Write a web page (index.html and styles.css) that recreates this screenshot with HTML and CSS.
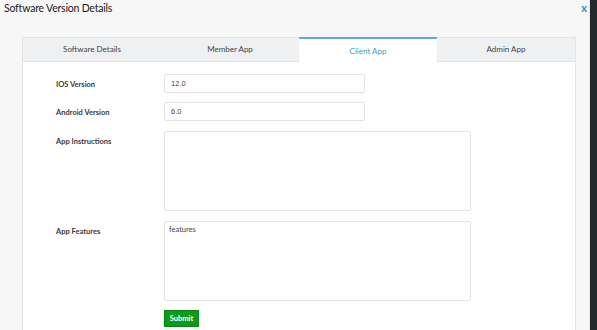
FILE: index.html
```html
<!DOCTYPE html>
<html lang="en">
<head>
    <meta charset="utf-8">
    <title>Software Version Details</title>
    <link rel="stylesheet" href="styles.css">
</head>
<body>
    <div class="modal">
        <div class="modal-header">
            <h4>Software Version Details</h4>
            <span class="close">x</span>
        </div>
        <div class="card">
            <div class="tabs">
                <div class="tab">Software Details</div>
                <div class="tab">Member App</div>
                <div class="tab active">Client App</div>
                <div class="tab">Admin App</div>
            </div>
            <form class="tab-body">
                <div class="form-row">
                    <label>IOS Version</label>
                    <input type="text" class="input" value="12.0">
                </div>
                <div class="form-row">
                    <label>Android Version</label>
                    <input type="text" class="input" value="6.0">
                </div>
                <div class="form-row area-row">
                    <label>App Instructions</label>
                    <textarea class="textarea"></textarea>
                </div>
                <div class="form-row area-row">
                    <label>App Features</label>
                    <textarea class="textarea">features</textarea>
                </div>
                <div class="form-row">
                    <label></label>
                    <button type="button" class="submit-btn">Submit</button>
                </div>
            </form>
        </div>
    </div>
    <div class="side-strip"></div>
</body>
</html>
```

FILE: styles.css
```css
body {
    margin: 0;
    width: 597px;
    height: 330px;
    overflow: hidden;
    display: flex;
    background: #f7f7f7;
    font-family: Lato, 'Open Sans', sans-serif;
}
.modal {
    width: 589px;
    flex-shrink: 0;
    background: #f7f7f7;
    border-right: 1px solid #e6e6e6;
}
.side-strip {
    flex: 1;
    background: #25282a;
}
.modal-header {
    display: flex;
    justify-content: space-between;
    align-items: flex-start;
    padding: 2px 4px 0 4px;
    height: 35px;
}
.modal-header h4 {
    margin: 0;
    font-size: 10.5px;
    font-weight: 400;
    color: #222;
    letter-spacing: -0.2px;
}
.close {
    color: #2a8fc8;
    font-weight: 700;
    font-size: 11px;
    line-height: 11px;
    margin-top: 0;
    margin-right: -2px;
}
.card {
    margin-left: 22px;
    width: 552px;
    background: #fff;
    border: 1px solid #e4e4e4;
    border-bottom: none;
    height: 300px;
}
.tabs {
    display: flex;
    height: 24px;
}
.tab {
    flex: 1;
    background: #eff0f2;
    border-bottom: 1px solid #e4e4e4;
    font-size: 8px;
    color: #444;
    text-align: center;
    line-height: 22px;
}
.tab.active {
    background: #fff;
    color: #3b9cc6;
    border-top: 2px solid #5aaed3;
    border-bottom: none;
    margin-top: -1px;
    line-height: 24px;
}
.tab-body {
    padding: 12px 0 0 33px;
    display: flex;
    flex-direction: column;
    gap: 9px;
}
.form-row {
    display: flex;
    align-items: flex-start;
}
.area-row {
    margin-top: 1px;
}
.form-row label {
    width: 108px;
    flex-shrink: 0;
    font-size: 7.5px;
    color: #3a3a3a;
    font-weight: 700;
    padding-top: 6px;
}
.input {
    width: 201px;
    height: 19px;
    box-sizing: border-box;
    border: 1px solid #e4e4e4;
    border-radius: 2px;
    padding: 0 6px;
    font-family: 'Liberation Sans', Arial, sans-serif;
    font-size: 7.5px;
    color: #444;
    margin: 0;
}
.textarea {
    width: 307px;
    height: 80px;
    box-sizing: border-box;
    border: 1px solid #e4e4e4;
    border-radius: 2px;
    padding: 3px 4px;
    font-family: Lato, sans-serif;
    font-size: 7.5px;
    color: #444;
    resize: none;
    margin: 0;
}
.submit-btn {
    width: 35px;
    height: 17px;
    padding: 0;
    background: #0a9b1a;
    border: 1px solid #078414;
    color: #fff;
    font-family: Lato, sans-serif;
    font-size: 7.5px;
    font-weight: 700;
}
```
